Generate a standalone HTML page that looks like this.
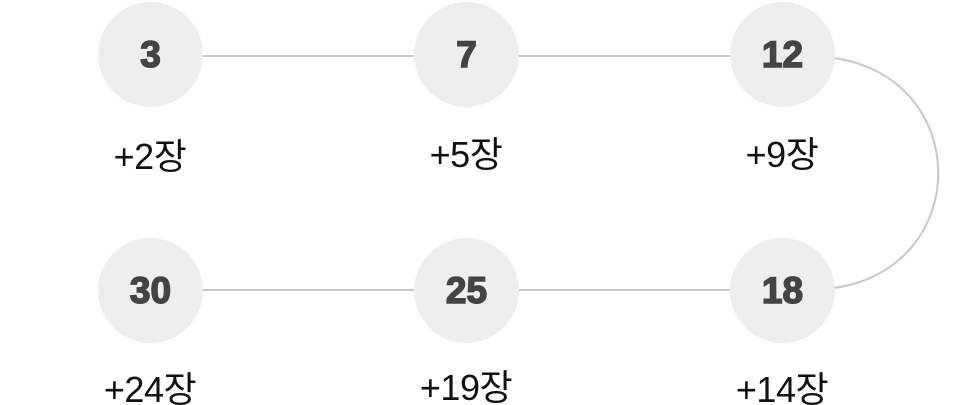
<!DOCTYPE html>
<html><head><meta charset="utf-8"><style>
html,body{margin:0;padding:0;background:#fff;width:960px;height:405px;overflow:hidden;position:relative}
.c{position:absolute;width:105px;height:105px;border-radius:50%;background:#eeeeee;display:flex;align-items:center;justify-content:center;font:bold 37px "Liberation Sans","Noto Sans CJK KR",sans-serif;color:#444;-webkit-text-stroke:1.5px #444;letter-spacing:0px}
.l{position:absolute;width:200px;text-align:center;font:36px "Liberation Sans","Noto Sans CJK KR",sans-serif;color:#111;letter-spacing:-0.5px;line-height:40px}
svg{position:absolute;left:0;top:0}
</style></head><body>
<svg width="960" height="405"><g stroke="#c8c8c8" stroke-width="2" fill="none">
<line x1="200" y1="56" x2="420" y2="56"/><line x1="516" y1="56" x2="736" y2="56"/>
<line x1="200" y1="290" x2="420" y2="290"/><line x1="516" y1="290" x2="736" y2="290"/>
<path d="M834,58 C973,78 973,268 834,288"/></g></svg>
<div class="c" style="left:98px;top:2px">3</div>
<div class="c" style="left:414px;top:2px">7</div>
<div class="c" style="left:730px;top:2px">12</div>
<div class="c" style="left:98px;top:238px">30</div>
<div class="c" style="left:414px;top:238px">25</div>
<div class="c" style="left:730px;top:238px">18</div>
<div class="l" style="left:50px;top:137px">+2장</div>
<div class="l" style="left:366px;top:135px">+5장</div>
<div class="l" style="left:682px;top:135px">+9장</div>
<div class="l" style="left:50px;top:370px">+24장</div>
<div class="l" style="left:366px;top:368px">+19장</div>
<div class="l" style="left:682px;top:370px">+14장</div>
</body></html>
